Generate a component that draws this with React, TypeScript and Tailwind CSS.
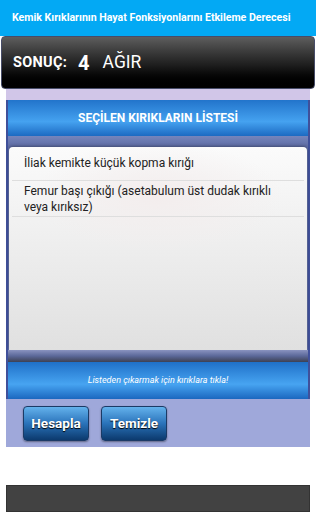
export default function App() {
  return (
    <div className="w-[316px] h-[512px] bg-white overflow-hidden font-['Roboto',sans-serif]">
      {/* Title bar */}
      <div className="h-[36px] bg-[#03a9f4] flex items-center pl-[12px] text-white text-[10.6px] font-bold">
        Kemik Kırıklarının Hayat Fonksiyonlarını Etkileme Derecesi
      </div>

      {/* Result */}
      <div className="mx-[1px] h-[53px] rounded-[4px] border border-[#474c68] bg-gradient-to-b from-[#5e5e5e] via-[#1e1e1e] via-55% to-black flex items-center pl-[11px] text-white">
        <span className="text-[14.5px] font-bold tracking-[0.3px]">SONUÇ:</span>
        <span className="ml-[11px] text-[20px] font-bold">4</span>
        <span className="ml-[13px] text-[17.5px]">AĞIR</span>
      </div>

      <div className="mx-[6px]">
        <div className="h-[11px] bg-[#d1c6e8]" />
        <div className="border-x-2 border-[#40509a]">
          {/* List header */}
          <div className="h-[36px] bg-gradient-to-b from-[#2274cb] via-[#45a2f0] via-60% to-[#1c6ac2] flex items-center justify-center text-white text-[12px] font-bold">
            SEÇİLEN KIRIKLARIN LİSTESİ
          </div>

          {/* List frame */}
          <div className="bg-[#5f6da5]">
            <div className="h-[11px] bg-gradient-to-b from-[#7585bc] to-[#5d6ba3]" />
            <div className="mx-[1px] h-[203px] rounded-t-[4px] shadow-[0_-1px_3px_rgba(0,0,0,0.3)] bg-[radial-gradient(ellipse_125px_55px_at_50%_50px,#f3eded,transparent),linear-gradient(#fbfbfb,#e0e0e0)]">
              <div className="mx-[3px] h-[34px] pb-[2px] border-b border-[#dedede] flex items-center pl-[12px] text-[12px] text-[#222]">
                İliak kemikte küçük kopma kırığı
              </div>
              <div className="mx-[3px] pt-[3px] pb-[1px] border-b border-[#dedede] pl-[12px] pr-[18px] text-[12px] leading-[15.5px] text-[#222]">
                Femur başı çıkığı (asetabulum üst dudak kırıklı veya kırıksız)
              </div>
            </div>
            <div className="h-[12px] bg-gradient-to-b from-[#8a93c0] via-[#5b6899] to-[#3d4154]" />
          </div>

          {/* Hint bar */}
          <div className="h-[37px] bg-gradient-to-b from-[#1f70c8] via-[#47a4f1] via-60% to-[#1b67bf] flex items-center justify-center text-white text-[9px] italic">
            Listeden çıkarmak için kırıklara tıkla!
          </div>
        </div>

        {/* Buttons */}
        <div className="h-[48px] bg-[#9fa8da] flex gap-[12px] pl-[17px] pt-[7px]">
          <button className="w-[66px] h-[35px] rounded-[4px] border border-[#1b3a66] bg-gradient-to-b from-[#64b2ec] via-[#2a73ba] via-50% to-[#0c3a6e] shadow-[0_1px_2px_rgba(0,0,0,0.4)] text-white text-[13.5px] font-bold [text-shadow:0_1px_1px_#000]">
            Hesapla
          </button>
          <button className="w-[66px] h-[35px] rounded-[4px] border border-[#1b3a66] bg-gradient-to-b from-[#64b2ec] via-[#2a73ba] via-50% to-[#0c3a6e] shadow-[0_1px_2px_rgba(0,0,0,0.4)] text-white text-[13.5px] font-bold [text-shadow:0_1px_1px_#000]">
            Temizle
          </button>
        </div>

        <div className="h-[38px]" />
        <div className="h-[27px] bg-[#424242] border border-[#333]" />
      </div>
    </div>
  );
}
